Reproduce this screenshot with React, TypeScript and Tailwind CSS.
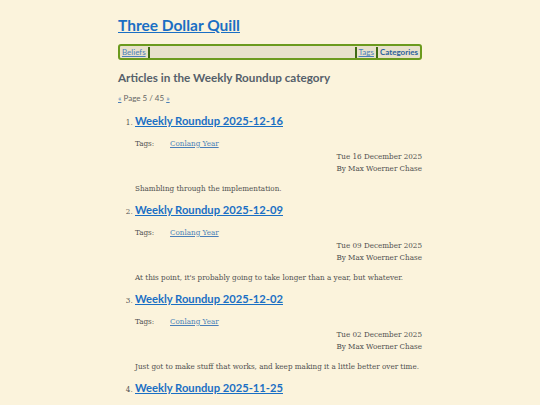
const items = [
  {
    title: "Weekly Roundup 2025-12-16",
    date: "Tue 16 December 2025",
    summary: "Shambling through the implementation.",
  },
  {
    title: "Weekly Roundup 2025-12-09",
    date: "Tue 09 December 2025",
    summary: "At this point, it's probably going to take longer than a year, but whatever.",
  },
  {
    title: "Weekly Roundup 2025-12-02",
    date: "Tue 02 December 2025",
    summary: "Just got to make stuff that works, and keep making it a little better over time.",
  },
  {
    title: "Weekly Roundup 2025-11-25",
    date: "Tue 25 November 2025",
    summary: "More of the same.",
  },
];

const heading = "font-['Lato','Open_Sans',sans-serif]";
const body = "font-['DejaVu_Serif_Condensed','DejaVu_Serif','Liberation_Serif',serif] font-stretch-condensed";

export default function App() {
  return (
    <div className={`min-h-screen bg-[#fbf3dc] ${body} text-[#555]`}>
      <div className="mx-auto w-[304px] pt-[14px]">
        <h1 className={`${heading} text-[15.5px] font-bold leading-[22px]`}>
          <a href="#" className="text-[#1a6fc4] underline">
            Three Dollar Quill
          </a>
        </h1>

        <nav
          className={`${heading} mt-[8px] flex h-[16px] items-center rounded-[3px] border-2 border-[#6b9a1e] bg-[#e8e1cb] px-[2px] text-[8px]`}
        >
          <a href="#" className="text-[#4a7fb8] underline">
            Beliefs
          </a>
          <span className="mx-[2px] h-[11px] w-[2px] bg-[#3f6b14]" />
          <span className="flex-1" />
          <span className="mx-[2px] h-[11px] w-[2px] bg-[#3f6b14]" />
          <a href="#" className="text-[#4a7fb8] underline">
            Tags
          </a>
          <span className="mx-[2px] h-[11px] w-[2px] bg-[#3f6b14]" />
          <a href="#" className="font-bold text-[#2a5f9a]">
            Categories
          </a>
        </nav>

        <h2 className={`${heading} mt-[8px] text-[11.7px] font-bold leading-[18px] text-[#55606a]`}>
          Articles in the Weekly Roundup category
        </h2>

        <p className={`${heading} mt-[7px] text-[8px] leading-[10px] text-[#666]`}>
          <a href="#" className="text-[#4a7fb8] underline">«</a> Page 5 / 45{" "}
          <a href="#" className="text-[#4a7fb8] underline">»</a>
        </p>

        <ol className="mt-[9px] list-decimal pl-[17px] text-[8px] leading-[18px] text-[#505050] marker:text-[#555]">
          {items.map((it) => (
            <li key={it.title} className="pb-[6px]">
              <a
                href="#"
                className={`${heading} text-[11.2px] font-bold leading-[18px] text-[#1a6fc4] underline`}
              >
                {it.title}
              </a>
              <div className="mt-[7px] flex leading-[10px]">
                <span className="w-[35px]">Tags:</span>
                <a href="#" className="text-[#4a7fb8] underline">
                  Conlang Year
                </a>
              </div>
              <div className="mt-[2px] text-right leading-[12px]">
                <div>{it.date}</div>
                <div>By Max Woerner Chase</div>
              </div>
              <p className="mt-[8px] leading-[12px]">{it.summary}</p>
            </li>
          ))}
        </ol>
      </div>
    </div>
  );
}
